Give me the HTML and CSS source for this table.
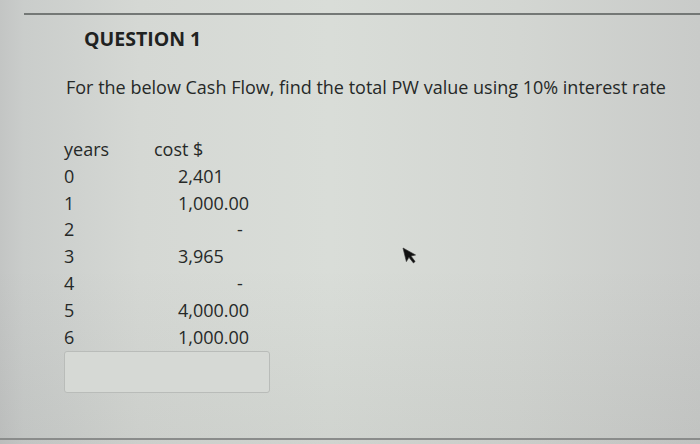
FILE: index.html
```html
<!DOCTYPE html>
<html>
<head>
<meta charset="utf-8">
<link rel="stylesheet" href="styles.css">
</head>
<body>
<div class="screen">
  <div class="panel">
    <h2 class="title">QUESTION 1</h2>
    <p class="prompt">For the below Cash Flow, find the total PW value using 10% interest rate</p>
    <div class="table">
      <div class="row head"><span class="yr">years</span><span class="cost">cost $</span></div>
      <div class="row"><span class="yr">0</span><span class="val">2,401</span></div>
      <div class="row"><span class="yr">1</span><span class="val">1,000.00</span></div>
      <div class="row"><span class="yr">2</span><span class="val dash">-</span></div>
      <div class="row"><span class="yr">3</span><span class="val">3,965</span></div>
      <div class="row"><span class="yr">4</span><span class="val dash">-</span></div>
      <div class="row"><span class="yr">5</span><span class="val">4,000.00</span></div>
      <div class="row"><span class="yr">6</span><span class="val">1,000.00</span></div>
    </div>
    <input class="answer" type="text">
  </div>
  <svg class="cursor" width="14" height="20" viewBox="0 0 14 20">
    <path d="M1 1 L1 15 L4.5 11.5 L7.5 18 L9.5 17 L6.8 10.8 L11.5 10.8 Z" fill="#111" stroke="#333" stroke-width="0.6" transform="rotate(-14 1 1)"/>
  </svg>
  <div class="bottom-line"></div>
</div>
</body>
</html>
```
FILE: styles.css
```css
html, body {
  margin: 0;
  padding: 0;
}
body {
  width: 700px;
  height: 444px;
  overflow: hidden;
  font-family: "Open Sans", "Noto Sans", sans-serif;
  color: #262928;
}
.screen {
  position: relative;
  width: 700px;
  height: 444px;
  background:
    linear-gradient(180deg, rgba(0,0,0,0) 60%, rgba(60,60,60,0.06) 100%),
    linear-gradient(90deg, #c3c5c4 0px, #cacdcb 24px, #d5d8d4 140px, #d9ddd8 330px, #d3d6d2 520px, #c9cbc9 700px);
  overflow: hidden;
}
.panel {
  margin-left: 24px;
  padding-top: 13px;
}
.panel::before {
  content: "";
  display: block;
  height: 2px;
  background: #747876;
}
.title {
  margin: 9px 0 0 60px;
  font-size: 19.5px;
  font-weight: 700;
  line-height: 29px;
  color: #1f2221;
}
.prompt {
  margin: 22px 0 0 42px;
  font-size: 18px;
  line-height: 24px;
}
.table {
  margin: 38px 0 0 40px;
  font-size: 18px;
}
.row {
  display: flex;
  height: 26.8px;
  line-height: 24px;
}
.yr {
  width: 90px;
}
.val {
  padding-left: 24px;
}
.val.dash {
  padding-left: 83px;
}
.answer {
  display: block;
  margin: 0 0 0 40px;
  width: 206px;
  height: 42px;
  box-sizing: border-box;
  border: 1px solid #b9bcb9;
  border-radius: 3px;
  background: #d6d9d5;
  padding: 0;
}
.cursor {
  position: absolute;
  left: 402px;
  top: 247px;
}
.bottom-line {
  position: absolute;
  left: 0;
  right: 0;
  top: 438px;
  height: 2px;
  background: #8a8c8b;
}
```
